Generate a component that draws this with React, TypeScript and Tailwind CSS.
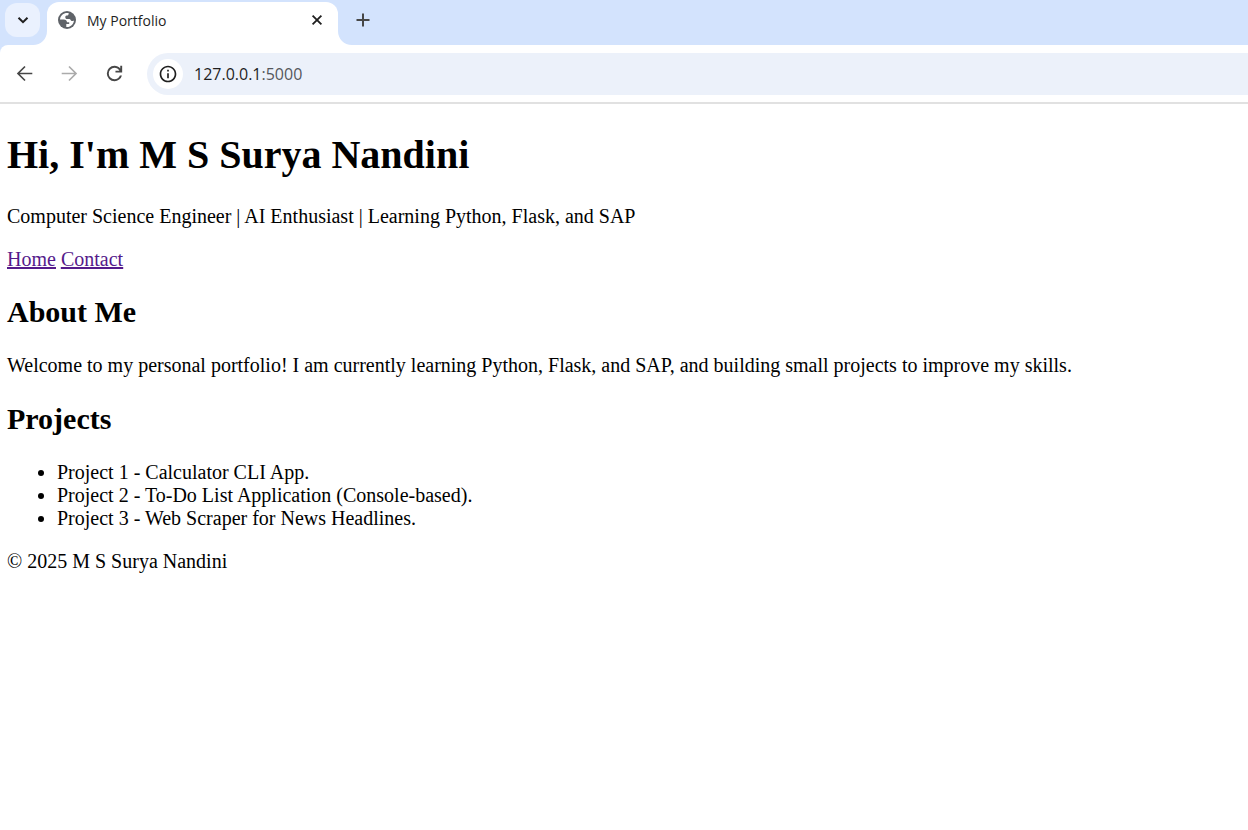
import React from "react";
import { MdInfoOutline } from "react-icons/md";

const projects = [
  "Project 1 - Calculator CLI App.",
  "Project 2 - To-Do List Application (Console-based).",
  "Project 3 - Web Scraper for News Headlines.",
];

function GlobeIcon() {
  return (
    <svg viewBox="0 0 18 18" className="size-[18px] shrink-0" aria-hidden="true">
      <circle cx="9" cy="9" r="9" fill="#5f6368" />
      <path
        d="M10.6 2.1C6.2 1.300 2.400 4.200 2 8.400H5.800C7.700 8.400 9 9.500 9 11.200H11.200V13.100H8.300V16C12.700 16.400 15.900 13 16 9.200C15.300 10.100 14.500 10.300 13.600 9.900C12.600 9.500 12.400 8.400 11.400 8.100H9.200C7.900 8 7.200 7.200 7.300 6C7.400 4.900 8.200 4.600 9.400 4.500C10.500 4.400 10.800 3.300 10.600 2.100Z"
        fill="#fff"
      />
    </svg>
  );
}

function StrokeIcon({ d, width = 2 }: { d: string; width?: number }) {
  return (
    <svg viewBox="0 0 20 20" className="size-[20px] shrink-0" fill="none" stroke="currentColor" strokeWidth={width} aria-hidden="true">
      <path d={d} />
    </svg>
  );
}

function ReloadIcon() {
  return (
    <svg viewBox="0 0 24 24" className="size-[23px]" fill="currentColor" aria-hidden="true">
      <path d="M12 20q-3.35 0-5.675-2.325T4 12t2.325-5.675T12 4q1.725 0 3.300.713T18 6.750V4h2v7h-7V9h4.200q-.8-1.400-2.187-2.200T12 6Q9.500 6 7.750 7.750T6 12t1.750 4.250T12 18q1.925 0 3.475-1.100T17.650 14h2.100q-.7 2.650-2.850 4.325T12 20" />
    </svg>
  );
}

function TabStrip() {
  return (
    <div className="flex h-[45px] bg-[#d3e3fd] pt-[2px] pl-[5px]">
      <button aria-label="Search tabs" className="mt-px flex h-[34px] w-[35px] items-center justify-center rounded-xl bg-[#eaf1fe] text-[#1f1f1f]">
        <StrokeIcon d="M5.500 7.700L10 12.200L14.500 7.700" />
      </button>
      <div className="relative ml-[7px] flex w-[291px] items-start rounded-t-xl bg-white px-[11px] pt-[9px]">
        <svg viewBox="0 0 14 14" className="absolute bottom-0 -left-[14px] size-[14px]" aria-hidden="true">
          <path d="M14 0V14H0C8 14 14 8 14 0Z" fill="#fff" />
        </svg>
        <svg viewBox="0 0 14 14" className="absolute -right-[14px] bottom-0 size-[14px]" aria-hidden="true">
          <path d="M0 0V14H14C6 14 0 8 0 0Z" fill="#fff" />
        </svg>
        <GlobeIcon />
        <span className="ml-[11px] flex-1 text-[14px] leading-[20px] text-[#1f1f1f]">My Portfolio</span>
        <button aria-label="Close tab" className="flex size-[20px] items-center justify-center text-[#1f1f1f]">
          <StrokeIcon d="M5.600 4.600L14.400 13.400M14.400 4.600L5.600 13.400" width={1.8} />
        </button>
      </div>
      <button aria-label="New tab" className="ml-[15px] flex h-[36px] w-[20px] items-center justify-center text-[#474747]">
        <StrokeIcon d="M10 3.500V16.500M3.500 10H16.500" />
      </button>
    </div>
  );
}

function Toolbar() {
  return (
    <div className="bg-[#d3e3fd]">
      <div className="flex h-[59px] items-center rounded-tl-lg border-b-2 border-[#e1e1e1] bg-white pl-[15px]">
        <button aria-label="Back" className="text-[#474747]">
          <StrokeIcon d="M17.300 9.500H3.200M10 2.500L3 9.500L10 16.500" width={1.7} />
        </button>
        <button aria-label="Forward" className="ml-[24px] text-[#ababab]">
          <StrokeIcon d="M2.700 9.500H16.800M10 2.500L17 9.500L10 16.500" width={1.7} />
        </button>
        <button aria-label="Reload" className="ml-[24px] text-[#474747]">
          <ReloadIcon />
        </button>
        <div className="ml-[21px] flex h-[42px] flex-1 items-center rounded-l-full bg-[#ecf1fa] pl-[6px]">
          <button aria-label="Site information" className="flex size-[30px] items-center justify-center rounded-full bg-white text-[#1f1f1f]">
            <MdInfoOutline className="size-[20px]" />
          </button>
          <a href="#top" className="ml-[11px] text-[16px] leading-[22px] text-[#1f1f1f]">
            127.0.0.1<span className="text-[#54575c]">:5000</span>
          </a>
        </div>
      </div>
    </div>
  );
}

export default function App() {
  return (
    <div className="min-h-screen bg-white">
      <header className="font-['Open_Sans',sans-serif]">
        <TabStrip />
        <Toolbar />
      </header>
      <main id="top" className="px-[7px] pt-[28px] font-['Liberation_Serif',serif] text-[20px] leading-[23px] text-black">
        <h1 className="text-[40px] leading-[46px] font-bold">Hi, I'm M S Surya Nandini</h1>
        <p className="mt-[27px]">Computer Science Engineer | AI Enthusiast | Learning Python, Flask, and SAP</p>
        <nav className="mt-[20px] flex gap-[5px] text-[#551a8b] underline">
          <a href="#top">Home</a>
          <a href="#contact">Contact</a>
        </nav>
        <h2 className="mt-[24px] text-[30px] leading-[34px] font-bold">About Me</h2>
        <p className="mt-[25px]">
          Welcome to my personal portfolio! I am currently learning Python, Flask, and SAP, and building small projects to improve my skills.
        </p>
        <h2 className="mt-[25px] text-[30px] leading-[34px] font-bold">Projects</h2>
        <ul className="mt-[25px] list-disc pl-[50px]">
          {projects.map((project) => (
            <li key={project}>{project}</li>
          ))}
        </ul>
        <footer id="contact" className="mt-[20px]">© 2025 M S Surya Nandini</footer>
      </main>
    </div>
  );
}
